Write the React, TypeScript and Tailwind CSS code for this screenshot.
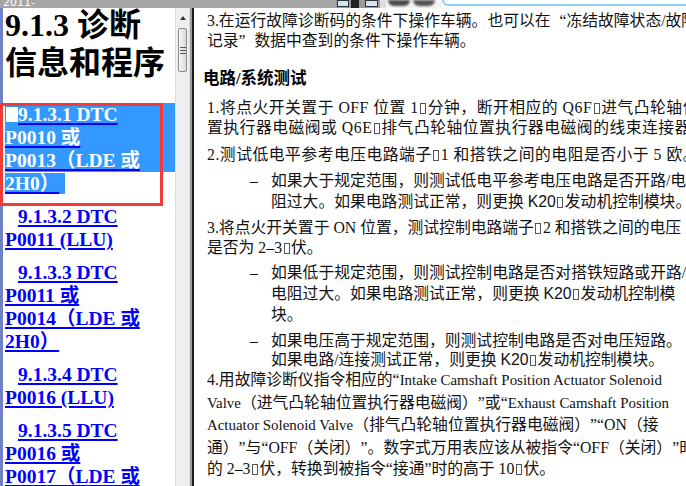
import React from 'react';

// missing-glyph box, as the help viewer draws it
function Bx() {
  return <span className="mx-[1.5px] inline-block h-[11px] w-[6px] border border-[#555] align-[-1px]" />;
}

function Sans({ children }: { children: React.ReactNode }) {
  return <span className="font-['Liberation_Sans','Noto_Sans_CJK_SC',sans-serif]">{children}</span>;
}

// full-width curly quote (SimSun style)
function Q({ open }: { open?: boolean }) {
  return (
    <span className={`inline-block w-[15.8px] ${open ? 'text-right' : 'text-left'}`}>{open ? '“' : '”'}</span>
  );
}

function En({ children }: { children: React.ReactNode }) {
  return <span className="text-[14.9px]">{children}</span>;
}

function TocItem({ lines }: { lines: string[] }) {
  return (
    <div className="mt-[10px] text-[#0000ff] underline decoration-2 decoration-[#0000ff] underline-offset-[2px]">
      {lines.map((l, i) => (
        <div key={i} className={i === 0 ? 'pl-[13px]' : ''}>
          {l}
        </div>
      ))}
    </div>
  );
}

function Bullet({ children, lead }: { children: React.ReactNode; lead: string }) {
  return (
    <div className={`flex ${lead}`}>
      <span className="w-[64px] shrink-0 pl-[43px]">–</span>
      <div className="whitespace-nowrap">{children}</div>
    </div>
  );
}

export default function App() {
  return (
    <div className="relative flex h-[486px] w-[686px] flex-col overflow-hidden bg-white [text-spacing-trim:space-all]">
      {/* window title strip, mostly scrolled off */}
      <div className="flex h-[8px] shrink-0 items-stretch overflow-hidden">
        <div className="w-[336px] bg-[#a6a6a6] pl-[3px]">
          <span className="block -mt-[3px] text-[11px] leading-[12px] font-['DejaVu_Sans',sans-serif] text-white">
            2011-
          </span>
        </div>
        <div className="flex w-[50px] items-start gap-[2px] bg-[#9a9a9a] pl-[1px]">
          <div className="h-[7px] w-[12px] border border-[#333] bg-[#cfe6f7]" />
          <div className="h-[8px] w-[8px] bg-[#222]" />
          <div className="ml-[4px] h-[7px] w-[13px] border border-[#333] bg-[#cfe6f7]" />
          <div className="h-[8px] w-[6px] bg-[#ddd]" />
        </div>
        <div className="flex w-[56px] items-start gap-[3px] bg-[#f4f4f4] pl-[2px]">
          <div className="h-[6px] w-[22px] rounded-b-full bg-[#4a4a4a] blur-[1px]" />
          <div className="h-[6px] w-[22px] rounded-b-full bg-[#555] blur-[1px]" />
        </div>
        <div className="flex-1 bg-white">
          <div className="h-[6px] rounded-bl-[8px] border-b-2 border-l-2 border-[#8fd0f2] bg-[#fbfdff]" />
        </div>
      </div>

      <div className="flex min-h-0 flex-1">
        {/* contents pane */}
        <div className="w-[3px] shrink-0 bg-[#7182c4]" />
        <div className="w-[172px] shrink-0 overflow-hidden pl-[2px] font-['Liberation_Serif','Noto_Sans_CJK_SC',serif] font-bold">
          <h1 className="-mt-[2px] text-[32px] leading-[38px] text-black">
            9.1.3 诊断
            <br />
            信息和程序
          </h1>

          <div className="mt-[21px] text-[19.5px] leading-[23px]">
            <div className="bg-[#3399ff] text-white">
              <div className="flex items-center">
                <span className="ml-[1px] inline-block h-[15px] w-[12px] bg-white" />
                <span className="underline decoration-2 decoration-[#0000ff] underline-offset-[2px]">9.1.3.1 DTC</span>
              </div>
              <div>
                <span className="underline decoration-2 decoration-[#0000ff] underline-offset-[2px]">P0010 或</span>
              </div>
              <div>
                <span className="underline decoration-2 decoration-[#0000ff] underline-offset-[2px]">P0013（LDE 或</span>
              </div>
            </div>
            <div>
              <span className="bg-[#3399ff] pr-[6px] text-white underline decoration-2 decoration-[#0000ff] underline-offset-[2px]">
                2H0）
              </span>
            </div>

            <TocItem lines={['9.1.3.2 DTC', 'P0011 (LLU)']} />
            <div className="mt-[1px]" />
            <TocItem lines={['9.1.3.3 DTC', 'P0011 或', 'P0014（LDE 或', '2H0） ']} />
            <TocItem lines={['9.1.3.4 DTC', 'P0016 (LLU)']} />
            <TocItem lines={['9.1.3.5 DTC', 'P0016 或', 'P0017（LDE 或', '2H0）']} />
          </div>
        </div>

        {/* scrollbar */}
        <div className="flex w-[15px] shrink-0 flex-col border-x border-[#dcdcdc] bg-[#efefef]">
          <div className="flex h-[19px] items-center justify-center">
            <div className="h-0 w-0 border-x-[3px] border-b-[4px] border-x-transparent border-b-[#333]" />
          </div>
          <div className="mx-[2px] mt-[1px] flex h-[44px] flex-col items-center justify-center gap-[2px] rounded-[2px] border border-[#8c8c8c] bg-gradient-to-r from-[#f6f6f6] to-[#d9d9d9]">
            <div className="h-px w-[6px] bg-[#555]" />
            <div className="h-px w-[6px] bg-[#555]" />
            <div className="h-px w-[6px] bg-[#555]" />
          </div>
        </div>

        {/* splitter */}
        <div className="w-[2px] shrink-0 bg-[#9e9e9e]" />
        <div className="w-[2px] shrink-0 bg-[#1c1c1c]" />

        {/* topic pane */}
        <div className="min-w-0 flex-1 overflow-hidden bg-white pl-[13px] pt-[3px] font-['Liberation_Serif','Noto_Sans_CJK_SC',serif] text-[15.8px] text-[#111]">
          <div className="whitespace-nowrap leading-[20px]">
            <div>
              3.在运行故障诊断码的条件下操作车辆。也可以在<Q open />冻结故障状态/故障记录<Q />
            </div>
            <div>
              记录<Q />数据中查到的条件下操作车辆。
            </div>
          </div>

          <h2 className="-ml-[4px] mt-[18px] text-[16.5px] font-bold leading-[20px] text-black">电路/系统测试</h2>

          <div className="mt-[9px] whitespace-nowrap leading-[20px] tracking-[0.5px]">
            <div>
              1.将点火开关置于 OFF 位置 1<Bx />分钟，断开相应的 Q6F<Bx />进气凸轮轴位置
            </div>
            <div>
              置执行器电磁阀或 Q6E<Bx />排气凸轮轴位置执行器电磁阀的线束连接器。
            </div>
          </div>

          <div className="mt-[7px] whitespace-nowrap leading-[20px] tracking-[0.5px]">
            2.测试低电平参考电压电路端子<Bx />1 和搭铁之间的电阻是否小于 5 欧。
          </div>

          <Bullet lead="mt-[5px] leading-[21px]">
            <div>如果大于规定范围，则测试低电平参考电压电路是否开路/电</div>
            <div>
              阻过大。如果电路测试正常，则更换 <Sans>K20</Sans>
              <Bx />发动机控制模块。
            </div>
          </Bullet>

          <div className="mt-[6px] whitespace-nowrap leading-[20px]">
            <div>
              3.将点火开关置于 ON 位置，测试控制电路端子<Bx />2 和搭铁之间的电压
            </div>
            <div>
              是否为 2–3<Bx />伏。
            </div>
          </div>

          <Bullet lead="mt-[4px] leading-[21px]">
            <div>如果低于规定范围，则测试控制电路是否对搭铁短路或开路/</div>
            <div>
              电阻过大。如果电路测试正常，则更换 <Sans>K20</Sans>
              <Bx />发动机控制模
            </div>
            <div>块。</div>
          </Bullet>

          <Bullet lead="mt-[6px] leading-[19px]">
            <div>如果电压高于规定范围，则测试控制电路是否对电压短路。</div>
            <div>
              如果电路/连接测试正常，则更换 <Sans>K20</Sans>
              <Bx />发动机控制模块。
            </div>
          </Bullet>

          <div className="whitespace-nowrap leading-[21.5px]">
            <div>
              4.用故障诊断仪指令相应的“<En>Intake Camshaft Position Actuator Solenoid</En>
            </div>
            <div>
              <En>Valve</En>（进气凸轮轴位置执行器电磁阀）”或“<En>Exhaust Camshaft Position</En>
            </div>
            <div>
              <En>Actuator Solenoid Valve</En>（排气凸轮轴位置执行器电磁阀）”“ON（接
            </div>
            <div>通）”与“OFF（关闭）”。数字式万用表应该从被指令“OFF（关闭）”时</div>
            <div>
              的 2–3<Bx />伏，转换到被指令“接通”时的高于 10<Bx />伏。
            </div>
          </div>
        </div>
      </div>

      {/* red annotation frame */}
      <div className="absolute left-0 top-[103px] h-[103px] w-[163px] border-[3px] border-[#f23a3a]" />
    </div>
  );
}
